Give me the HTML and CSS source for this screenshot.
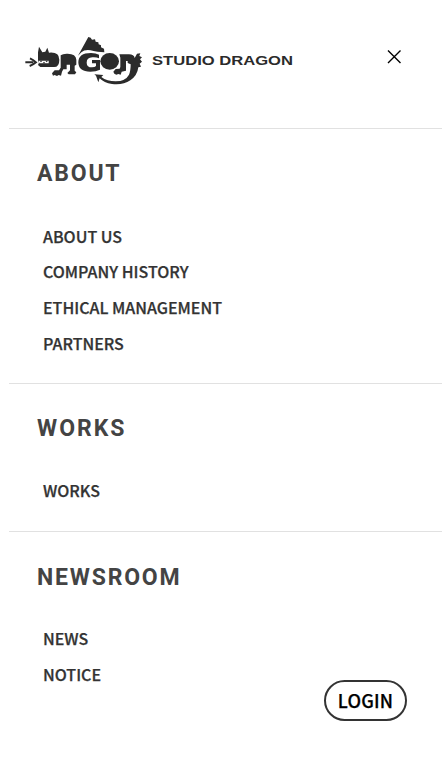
FILE: index.html
```html
<!DOCTYPE html>
<html lang="en">
<head>
<meta charset="utf-8">
<title>Studio Dragon</title>
<link rel="stylesheet" href="styles.css">
</head>
<body>
<header class="header">
  <a class="brand" aria-label="Studio Dragon">
    <svg class="dragon" viewBox="0 0 390 186" fill="#2b2b2b">
      <path d="M16 97h24M30 85q11 5 18 12-8 7-19 11" fill="none" stroke="#2b2b2b" stroke-width="6"/>
      <path d="M54 91V67l3-17 10 17 9-2 6-12 5 15q31-3 31 21 0 23-17 22H61l-7-6 3-7z"/>
      <path d="M56 92h30v8H58z" fill="#fff"/>
      <path d="m59 92 4 5 4-5zm9 8 4-5 4 5zm8-8 4 5 4-5z"/>
      <path d="M122 76q6-5 18-5 28-1 29 18v15l-5 3v15l5 5-4 6h-19l-4-4 8-8v-17h-10v14h-10l-4 7-3 12-7-2-5 3-7-3-5 2-3-7 8-9h13l5-8z"/>
      <path d="m174 77 31-56 7 2 4 6 9-1 2 7 8 2 1 6 7 3v6l9 4 1 11-20-2-12-2q-25-7-37 4z"/>
      <path d="M237 74v11q-8-4-20-3-17 1-17 16 0 14 16 14 9 0 12-4v-8h-12V90h24v29q-12 6-29 6-36 0-36-28 0-28 38-28 15 0 24 5z"/>
      <ellipse cx="269" cy="94" rx="28" ry="25"/>
      <path d="M298 73h29q15 0 17 11l7-13 10-1-3 8 8 4-6 6 6 7-7 6 4 9-8 2q-3 25-24 39-22 15-55 11-24-3-37-17l-4 12-7-20-5-4 27 2-6 6q17 13 43 13 30-1 40-20 5-11 5-31l-9-4v-6h-5v29l-13 3-3 9-7-2-6 2-6-3-3-6 7-8 12-1 2-5V83z"/>
    </svg>
    <svg class="wordmark" viewBox="0 0 142 14"><text x="0" y="10.8" textLength="141" lengthAdjust="spacingAndGlyphs">STUDIO DRAGON</text></svg>
  </a>
  <svg class="close" viewBox="0 0 14 14" role="img" aria-label="Close"><path d="m1 .5 12.5 12.5M13.5.5 1 13"/></svg>
</header>
<nav>
  <section class="group about">
    <h2>ABOUT</h2>
    <ul><li>ABOUT US</li><li>COMPANY HISTORY</li><li>ETHICAL MANAGEMENT</li><li>PARTNERS</li></ul>
  </section>
  <section class="group works">
    <h2>WORKS</h2>
    <ul><li>WORKS</li></ul>
  </section>
  <section class="group newsroom">
    <h2>NEWSROOM</h2>
    <ul><li>NEWS</li><li>NOTICE</li></ul>
  </section>
</nav>
<a class="login">LOGIN</a>
</body>
</html>
```
FILE: styles.css
```css
* { box-sizing: border-box; }
body {
  margin: 0;
  height: 778px;
  overflow: hidden;
  background: #fff;
  color: #333;
  font-family: "Noto Sans CJK KR", sans-serif;
}
.header {
  height: 128px;
  padding: 30px 41px 0 20px;
  display: flex;
  justify-content: space-between;
  align-items: flex-start;
}
.brand { display: flex; }
.dragon { width: 130px; height: 62px; }
.wordmark { width: 142px; height: 14px; margin: 24px 0 0 2px; overflow: visible; }
.wordmark text {
  font: bold 13px "Liberation Sans", sans-serif;
  fill: #2b2b2b;
}
.close { width: 14px; height: 14px; margin-top: 20px; overflow: visible; }
.close path { stroke: #000; stroke-width: 1.4; fill: none; }
.group {
  margin-left: 9px;
  padding: 29px 0 0 28px;
  border-top: 1px solid #e1e1e1;
}
.about { height: 255px; }
.works { height: 148px; }
.newsroom { height: 200px; padding-top: 30px; }
h2 {
  margin: 0;
  color: #444;
  font: bold 23px/32px Roboto, sans-serif;
  letter-spacing: 1.8px;
}
.works h2 { letter-spacing: 2px; }
ul { margin: 27.7px 0 0 6px; padding: 0; list-style: none; }
.works ul { margin-top: 27px; }
.newsroom ul { margin-top: 26px; }
li {
  height: 35.7px;
  font-size: 16px;
  font-weight: 500;
  line-height: 36px;
  -webkit-text-stroke: 0.25px #333;
}
.login {
  position: absolute;
  left: 324px;
  top: 680px;
  width: 83px;
  height: 41px;
  border: 2px solid #333;
  border-radius: 21px;
  color: #000;
  font-size: 18px;
  font-weight: 500;
  letter-spacing: 0.2px;
  line-height: 36px;
  text-align: center;
  -webkit-text-stroke: 0.25px #000;
}
```
